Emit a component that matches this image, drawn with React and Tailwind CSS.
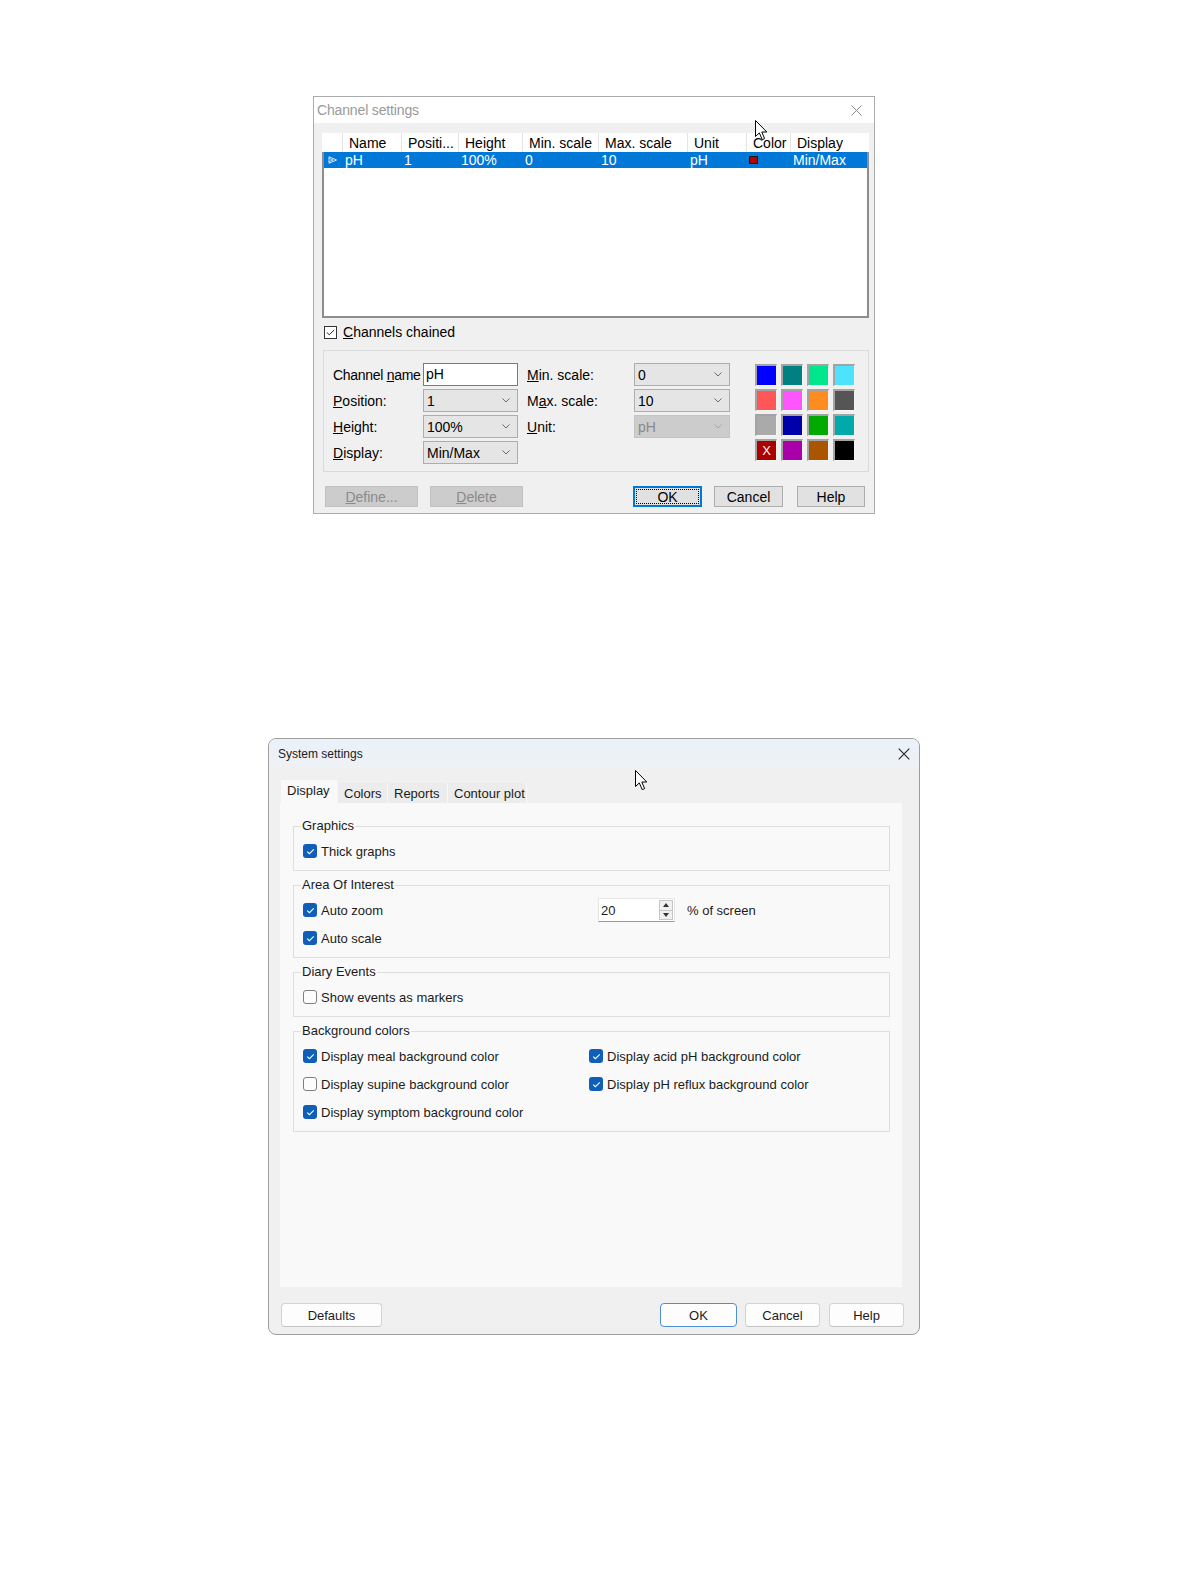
import React from "react";

const F = "font-['Liberation_Sans',Arial,sans-serif]";

function Cursor({ className }) {
  return (
    <svg className={className} width="13" height="21" viewBox="0 0 13 21">
      <path
        d="M0.5 0.5 L0.5 16.5 L4.3 12.9 L7.2 19.6 L9.6 18.6 L6.8 12 L11.8 12 Z"
        fill="#fff"
        stroke="#000"
        strokeWidth="1"
        strokeLinejoin="round"
      />
    </svg>
  );
}

function Chevron({ color = "#6a6a6a" }) {
  return (
    <svg width="8" height="5" viewBox="0 0 8 5">
      <path d="M0.5 0.5 L4 4 L7.5 0.5" fill="none" stroke={color} strokeWidth="1" />
    </svg>
  );
}

function Combo({ className, value, disabled }) {
  return (
    <div
      className={`h-[23px] flex items-center justify-between pl-[3px] pr-[7px] border ${
        disabled ? "bg-[#cccccc] border-[#c4c4c4] text-[#8a8a8a]" : "bg-[#e5e5e5] border-[#adadad]"
      } ${className}`}
    >
      <span>{value}</span>
      <Chevron color={disabled ? "#a8a8a8" : "#6a6a6a"} />
    </div>
  );
}

function Label({ children }) {
  return <div className="h-[23px] flex items-center whitespace-nowrap">{children}</div>;
}

const swatches = [
  { c: "bg-[#0000ff]" },
  { c: "bg-[#008080]" },
  { c: "bg-[#00e68c]" },
  { c: "bg-[#4ee3fd]" },
  { c: "bg-[#ff5757]" },
  { c: "bg-[#ff55ff]" },
  { c: "bg-[#ff8c1f]" },
  { c: "bg-[#555555]" },
  { c: "bg-[#aaaaaa]" },
  { c: "bg-[#0000aa]" },
  { c: "bg-[#00aa00]" },
  { c: "bg-[#00aaaa]" },
  { c: "bg-[#aa0000]", x: true },
  { c: "bg-[#aa00aa]" },
  { c: "bg-[#aa5500]" },
  { c: "bg-[#000000]" },
];

function ChannelSettings() {
  const cols = [
    ["w-[59px]", "Name", "pH"],
    ["w-[57px]", "Positi...", "1"],
    ["w-[64px]", "Height", "100%"],
    ["w-[76px]", "Min. scale", "0"],
    ["w-[89px]", "Max. scale", "10"],
    ["w-[59px]", "Unit", "pH"],
    ["w-[44px]", "Color", null],
    ["flex-1", "Display", "Min/Max"],
  ];
  return (
    <div className="relative ml-[313px] w-[562px] h-[418px] border border-[#ababab] bg-[#f0f0f0] flex flex-col text-[14px] text-black leading-none">
      <div className="h-[26px] bg-white flex items-center justify-between pl-[3px] pr-[12px] shrink-0">
        <span className="text-[14px] tracking-[-0.15px] text-[#9a9a9a]">Channel settings</span>
        <svg width="11" height="11" viewBox="0 0 11 11">
          <path d="M0.5 0.5 L10.5 10.5 M10.5 0.5 L0.5 10.5" stroke="#8a8a8a" strokeWidth="1" />
        </svg>
      </div>

      <div className="flex-1 flex flex-col pl-[8px] pr-[5px]">
        {/* list view */}
        <div className="mt-[10px] bg-white">
          <div className="h-[19px] flex px-[2px]">
            <div className="w-[18px]" />
            {cols.map(([w, h]) => (
              <div
                key={h}
                className={`${w} h-full border-l border-[#e5e5e5] pl-[6px] flex items-center whitespace-nowrap overflow-hidden`}
              >
                {h}
              </div>
            ))}
          </div>
          <div className="h-[166px] border-2 border-t-0 border-[#8d8d8d]">
            <div className="h-[16px] bg-[#0078d7] text-white flex">
              <div className="w-[18px] flex items-center justify-center">
                <svg width="10" height="8" viewBox="0 0 10 8">
                  <path d="M1 0.8 L8.5 4 L1 7.2 Z" fill="none" stroke="#dbe9f7" strokeWidth="1" />
                  <path d="M1 2.3 L5.2 4 L1 5.7" fill="none" stroke="#dbe9f7" strokeWidth="0.8" />
                </svg>
              </div>
              {cols.map(([w, h, v]) => (
                <div key={h} className={`${w} h-full pl-[3px] flex items-center whitespace-nowrap`}>
                  {v === null ? (
                    <span className="w-[9px] h-[8px] bg-[#b00000] border border-[#1a1a1a]" />
                  ) : (
                    v
                  )}
                </div>
              ))}
            </div>
          </div>
        </div>

        {/* channels chained */}
        <div className="mt-[6px] h-[16px] flex items-center pl-[2px]">
          <span className="w-[13px] h-[13px] border border-[#333] bg-white flex items-center justify-center">
            <svg width="9" height="7" viewBox="0 0 9 7">
              <path d="M0.8 3.4 L3.3 5.8 L8.3 0.8" fill="none" stroke="#222" strokeWidth="1" />
            </svg>
          </span>
          <span className="ml-[6px]">
            <span className="underline">C</span>hannels chained
          </span>
        </div>

        {/* settings panel */}
        <div className="mt-[10px] ml-[1px] h-[122px] border border-[#dadada] flex pt-[12px] pl-[9px]">
          <div className="flex flex-col gap-[3px] w-[90px]">
            <Label>
              <span className="tracking-[-0.3px]">
                Channel <span className="underline">n</span>ame
              </span>
            </Label>
            <Label>
              <span className="underline">P</span>osition:
            </Label>
            <Label>
              <span className="underline">H</span>eight:
            </Label>
            <Label>
              <span className="underline">D</span>isplay:
            </Label>
          </div>
          <div className="flex flex-col gap-[3px] w-[95px]">
            <div className="h-[23px] bg-white border border-[#7a7a7a] pl-[2px] pt-[3px]">pH</div>
            <Combo className="w-[95px]" value="1" />
            <Combo className="w-[95px]" value="100%" />
            <Combo className="w-[95px]" value="Min/Max" />
          </div>
          <div className="flex flex-col gap-[3px] w-[116px] pl-[9px]">
            <Label>
              <span className="underline">M</span>in. scale:
            </Label>
            <Label>
              M<span className="underline">a</span>x. scale:
            </Label>
            <Label>
              <span className="underline">U</span>nit:
            </Label>
          </div>
          <div className="flex flex-col gap-[3px] w-[96px]">
            <Combo className="w-[96px]" value="0" />
            <Combo className="w-[96px]" value="10" />
            <Combo className="w-[96px]" value="pH" disabled />
          </div>
          <div className="ml-[25px] mt-[1px] grid grid-cols-4 gap-x-[4px] gap-y-[3px] self-start">
            {swatches.map((s, i) => (
              <div
                key={i}
                className={`w-[22px] h-[22px] border-t-2 border-l-2 border-b border-r border-t-[#a3a3a3] border-l-[#a3a3a3] border-b-[#f4f4f4] border-r-[#f4f4f4] ${s.c} flex items-center justify-center text-white text-[13px]`}
              >
                {s.x ? "X" : null}
              </div>
            ))}
          </div>
        </div>

        {/* buttons */}
        <div className="mt-[14px] h-[21px] flex">
          <div className="ml-[3px] w-[93px] h-full bg-[#cccccc] border border-[#c2c2c2] text-[#8a8a8a] flex items-center justify-center">
            <span>
              <span className="underline">D</span>efine...
            </span>
          </div>
          <div className="ml-[12px] w-[93px] h-full bg-[#cccccc] border border-[#c2c2c2] text-[#8a8a8a] flex items-center justify-center">
            <span>
              <span className="underline">D</span>elete
            </span>
          </div>
          <div className="ml-[110px] w-[69px] h-full bg-[#e1e1e1] border-2 border-[#0078d7] p-[1px]">
            <div className="w-full h-full border border-dotted border-black flex items-center justify-center">OK</div>
          </div>
          <div className="ml-[12px] w-[69px] h-full bg-[#e1e1e1] border border-[#adadad] flex items-center justify-center">
            Cancel
          </div>
          <div className="ml-[14px] w-[68px] h-full bg-[#e1e1e1] border border-[#adadad] flex items-center justify-center">
            Help
          </div>
        </div>
      </div>

      <Cursor className="absolute left-[441px] top-[23px]" />
    </div>
  );
}

function WCheck({ checked }) {
  return checked ? (
    <span className="w-[14px] h-[14px] rounded-[3px] bg-[#0f5fb8] flex items-center justify-center shrink-0">
      <svg width="9" height="7" viewBox="0 0 9 7">
        <path d="M1.2 3.6 L3.4 5.7 L7.8 1.3" fill="none" stroke="#fff" strokeWidth="1.1" />
      </svg>
    </span>
  ) : (
    <span className="w-[14px] h-[14px] rounded-[3px] border border-[#7f7f7f] bg-[#fcfcfc] shrink-0" />
  );
}

function CheckRow({ checked, children, className = "" }) {
  return (
    <div className={`h-[28px] flex items-center gap-[4px] ${className}`}>
      <WCheck checked={checked} />
      <span className="whitespace-nowrap">{children}</span>
    </div>
  );
}

function Group({ title, children, className = "" }) {
  return (
    <fieldset className={`border border-[#dedede] mx-[13px] w-[597px] min-w-0 ${className}`}>
      <legend className="ml-[7px] px-[1px] h-[16px] leading-[16px]">{title}</legend>
      <div className="pt-[3px] pb-[5px] pl-[9px]">{children}</div>
    </fieldset>
  );
}

function Btn({ children, primary, className = "" }) {
  return (
    <div
      className={`h-[24px] rounded-[4px] bg-[#fdfdfd] border flex items-center justify-center ${
        primary ? "border-[#4d8fd6]" : "border-[#d3d3d3] border-b-[#c2c2c2]"
      } ${className}`}
    >
      {children}
    </div>
  );
}

function SystemSettings() {
  return (
    <div className="relative mt-[224px] ml-[268px] w-[652px] h-[597px] border border-[#9e9e9e] rounded-[8px] bg-[#f0f0f0] flex flex-col overflow-hidden text-[13px] text-[#1b1b1b] leading-none">
      <div className="h-[30px] shrink-0 bg-gradient-to-b from-[#eaf1fa] to-[#eff1f4] flex items-center justify-between pl-[9px] pr-[9px]">
        <span className="text-[12px]">System settings</span>
        <svg width="12" height="12" viewBox="0 0 12 12">
          <path d="M0.7 0.7 L11.3 11.3 M11.3 0.7 L0.7 11.3" stroke="#222" strokeWidth="1.1" />
        </svg>
      </div>

      <div className="flex-1 flex flex-col pl-[11px] pr-[17px]">
        {/* tabs */}
        <div className="mt-[11px] h-[23px] flex items-end">
          <div className="ml-[1px] w-[56px] h-[23px] bg-[#f9f9f9] pl-[6px] pt-[4px]">Display</div>
          <div className="w-[50px] h-[20px] bg-[#ececec] border-l border-[#f7f7f7] pl-[6px] pt-[4px]">Colors</div>
          <div className="w-[60px] h-[20px] bg-[#ececec] border-l border-[#f7f7f7] pl-[6px] pt-[4px]">Reports</div>
          <div className="w-[80px] h-[20px] bg-[#ececec] border-x border-[#f7f7f7] pl-[6px] pt-[4px]">
            Contour plot
          </div>
        </div>

        {/* panel */}
        <div className="h-[484px] w-[622px] bg-[#f9f9f9] flex flex-col">
          <Group title="Graphics" className="mt-[15px]">
            <CheckRow checked>Thick graphs</CheckRow>
          </Group>

          <Group title="Area Of Interest" className="mt-[6px]">
            <div className="flex items-center">
              <CheckRow checked className="w-[295px]">
                Auto zoom
              </CheckRow>
              <div className="w-[77px] h-[24px] bg-white border border-[#e6e6e6] border-b-[#9a9a9a] flex items-center pl-[2px] pr-[1px]">
                <span className="flex-1">20</span>
                <div className="w-[14px] h-[20px] flex flex-col border border-[#c6c6c6]">
                  <div className="flex-1 bg-[#f0f0f0] border-b border-[#c6c6c6] flex items-center justify-center">
                    <svg width="6" height="4" viewBox="0 0 6 4">
                      <path d="M0 4 L3 0 L6 4 Z" fill="#333" />
                    </svg>
                  </div>
                  <div className="flex-1 bg-[#f0f0f0] flex items-center justify-center">
                    <svg width="6" height="4" viewBox="0 0 6 4">
                      <path d="M0 0 L3 4 L6 0 Z" fill="#333" />
                    </svg>
                  </div>
                </div>
              </div>
              <span className="ml-[12px]">% of screen</span>
            </div>
            <CheckRow checked>Auto scale</CheckRow>
          </Group>

          <Group title="Diary Events" className="mt-[6px]">
            <CheckRow checked={false}>Show events as markers</CheckRow>
          </Group>

          <Group title="Background colors" className="mt-[6px]">
            <div className="grid grid-cols-[286px_1fr]">
              <CheckRow checked>Display meal background color</CheckRow>
              <CheckRow checked>Display acid pH background color</CheckRow>
              <CheckRow checked={false}>Display supine background color</CheckRow>
              <CheckRow checked>Display pH reflux background color</CheckRow>
              <CheckRow checked>Display symptom background color</CheckRow>
            </div>
          </Group>
        </div>

        {/* buttons */}
        <div className="mt-[16px] mr-[-2px] flex">
          <Btn className="ml-[1px] w-[101px]">Defaults</Btn>
          <Btn primary className="ml-auto w-[77px]">
            OK
          </Btn>
          <Btn className="ml-[8px] w-[75px]">Cancel</Btn>
          <Btn className="ml-[9px] w-[75px]">Help</Btn>
        </div>
      </div>

      <Cursor className="absolute left-[366px] top-[31px]" />
    </div>
  );
}

export default function App() {
  return (
    <div className={`w-[1188px] h-[1584px] bg-white pt-[96px] ${F}`}>
      <ChannelSettings />
      <SystemSettings />
    </div>
  );
}
